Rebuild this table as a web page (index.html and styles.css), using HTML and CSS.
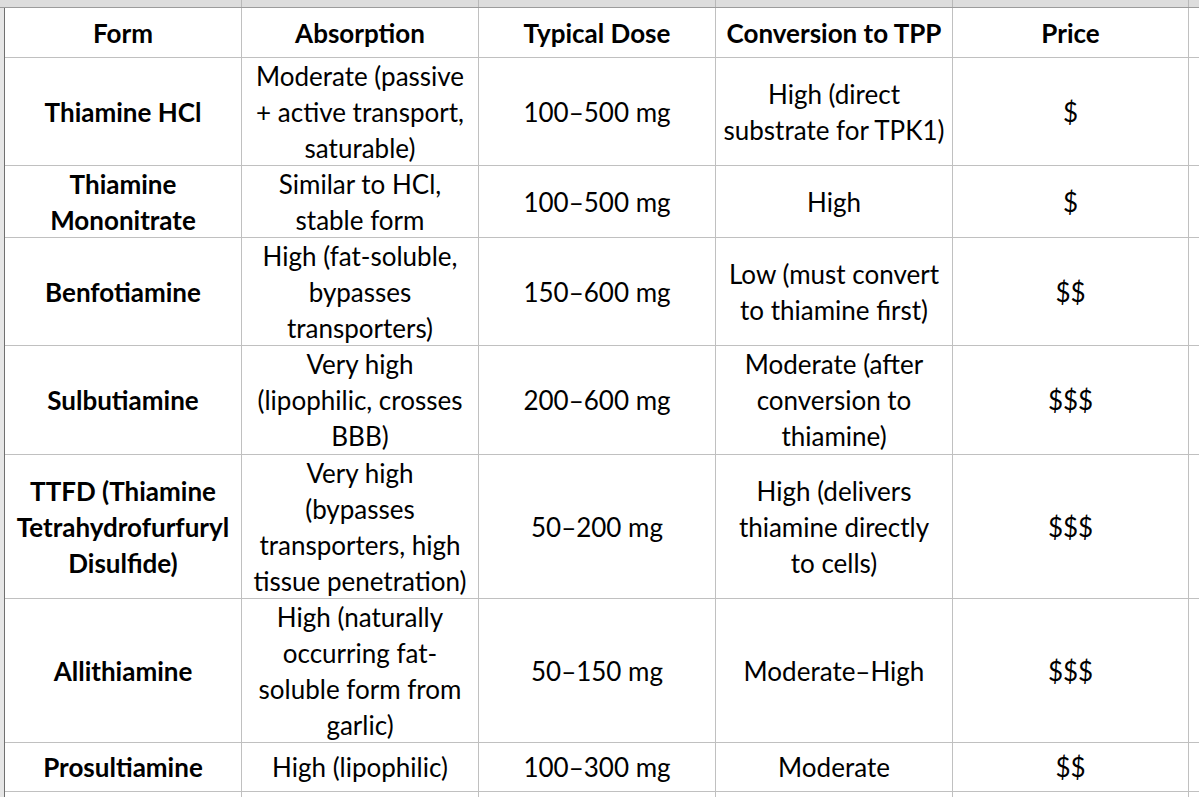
FILE: index.html
```html
<!DOCTYPE html>
<html lang="en">
<head>
<meta charset="utf-8">
<title>Thiamine forms</title>
<link rel="stylesheet" href="styles.css">
</head>
<body>
<div class="colbar">
  <div class="cb-gutter"></div>
  <div class="cb-cells">
    <div></div><div></div><div></div><div></div><div></div><div></div>
  </div>
</div>
<div class="sheet">
  <div class="gutter"></div>
  <div class="grid">
    <div class="cell hd">Form</div>
    <div class="cell hd">Absorption</div>
    <div class="cell hd">Typical Dose</div>
    <div class="cell hd">Conversion to TPP</div>
    <div class="cell hd">Price</div>
    <div class="cell blank"></div>

    <div class="cell b">Thiamine HCl</div>
    <div class="cell">Moderate (passive<br>+ active transport,<br>saturable)</div>
    <div class="cell">100–500 mg</div>
    <div class="cell">High (direct<br>substrate for TPK1)</div>
    <div class="cell">$</div>
    <div class="cell blank"></div>

    <div class="cell b">Thiamine<br>Mononitrate</div>
    <div class="cell">Similar to HCl,<br>stable form</div>
    <div class="cell">100–500 mg</div>
    <div class="cell">High</div>
    <div class="cell">$</div>
    <div class="cell blank"></div>

    <div class="cell b">Benfotiamine</div>
    <div class="cell">High (fat-soluble,<br>bypasses<br>transporters)</div>
    <div class="cell">150–600 mg</div>
    <div class="cell">Low (must convert<br>to thiamine first)</div>
    <div class="cell">$$</div>
    <div class="cell blank"></div>

    <div class="cell b">Sulbutiamine</div>
    <div class="cell">Very high<br>(lipophilic, crosses<br>BBB)</div>
    <div class="cell">200–600 mg</div>
    <div class="cell">Moderate (after<br>conversion to<br>thiamine)</div>
    <div class="cell">$$$</div>
    <div class="cell blank"></div>

    <div class="cell b">TTFD (Thiamine<br>Tetrahydrofurfuryl<br>Disulfide)</div>
    <div class="cell">Very high<br>(bypasses<br>transporters, high<br>tissue penetration)</div>
    <div class="cell">50–200 mg</div>
    <div class="cell">High (delivers<br>thiamine directly<br>to cells)</div>
    <div class="cell">$$$</div>
    <div class="cell blank"></div>

    <div class="cell b">Allithiamine</div>
    <div class="cell">High (naturally<br>occurring fat-<br>soluble form from<br>garlic)</div>
    <div class="cell">50–150 mg</div>
    <div class="cell">Moderate–High</div>
    <div class="cell">$$$</div>
    <div class="cell blank"></div>

    <div class="cell b">Prosultiamine</div>
    <div class="cell">High (lipophilic)</div>
    <div class="cell">100–300 mg</div>
    <div class="cell">Moderate</div>
    <div class="cell">$$</div>
    <div class="cell blank"></div>

    <div class="cell blank"></div>
    <div class="cell blank"></div>
    <div class="cell blank"></div>
    <div class="cell blank"></div>
    <div class="cell blank"></div>
    <div class="cell blank"></div>
  </div>
</div>
</body>
</html>
```

FILE: styles.css
```css
html, body {
  margin: 0;
  padding: 0;
  background: #ffffff;
  overflow: hidden;
}
body {
  width: 1199px;
  height: 797px;
  font-family: "Lato", "Liberation Sans", sans-serif;
  color: #000000;
}
.colbar {
  display: flex;
  height: 7px;
  background: #dddddd;
  border-bottom: 1px solid #9c9c9c;
}
.cb-gutter {
  width: 5px;
  flex: none;
}
.cb-cells {
  display: grid;
  grid-template-columns: 236px 236px 236px 236px 235px 1fr;
  column-gap: 1px;
  background: #b8b8b8;
  flex: 1;
}
.cb-cells div {
  background: #dddddd;
}
.sheet {
  display: flex;
  height: 789px;
}
.gutter {
  width: 4px;
  flex: none;
  background: #e6e6e6;
  border-right: 1px solid #707070;
}
.grid {
  flex: 1;
  display: grid;
  grid-template-columns: 236px 236px 236px 236px 235px 1fr;
  grid-template-rows: 49px 107px 71px 107px 108px 143px 143px 48px 40px;
  gap: 1px;
  background: #c0c0c0;
  align-content: start;
}
.cell {
  background: #ffffff;
  display: flex;
  align-items: center;
  justify-content: center;
  text-align: center;
  font-size: 26px;
  line-height: 36px;
  white-space: nowrap;
}
.hd, .b {
  font-weight: 700;
}
```
